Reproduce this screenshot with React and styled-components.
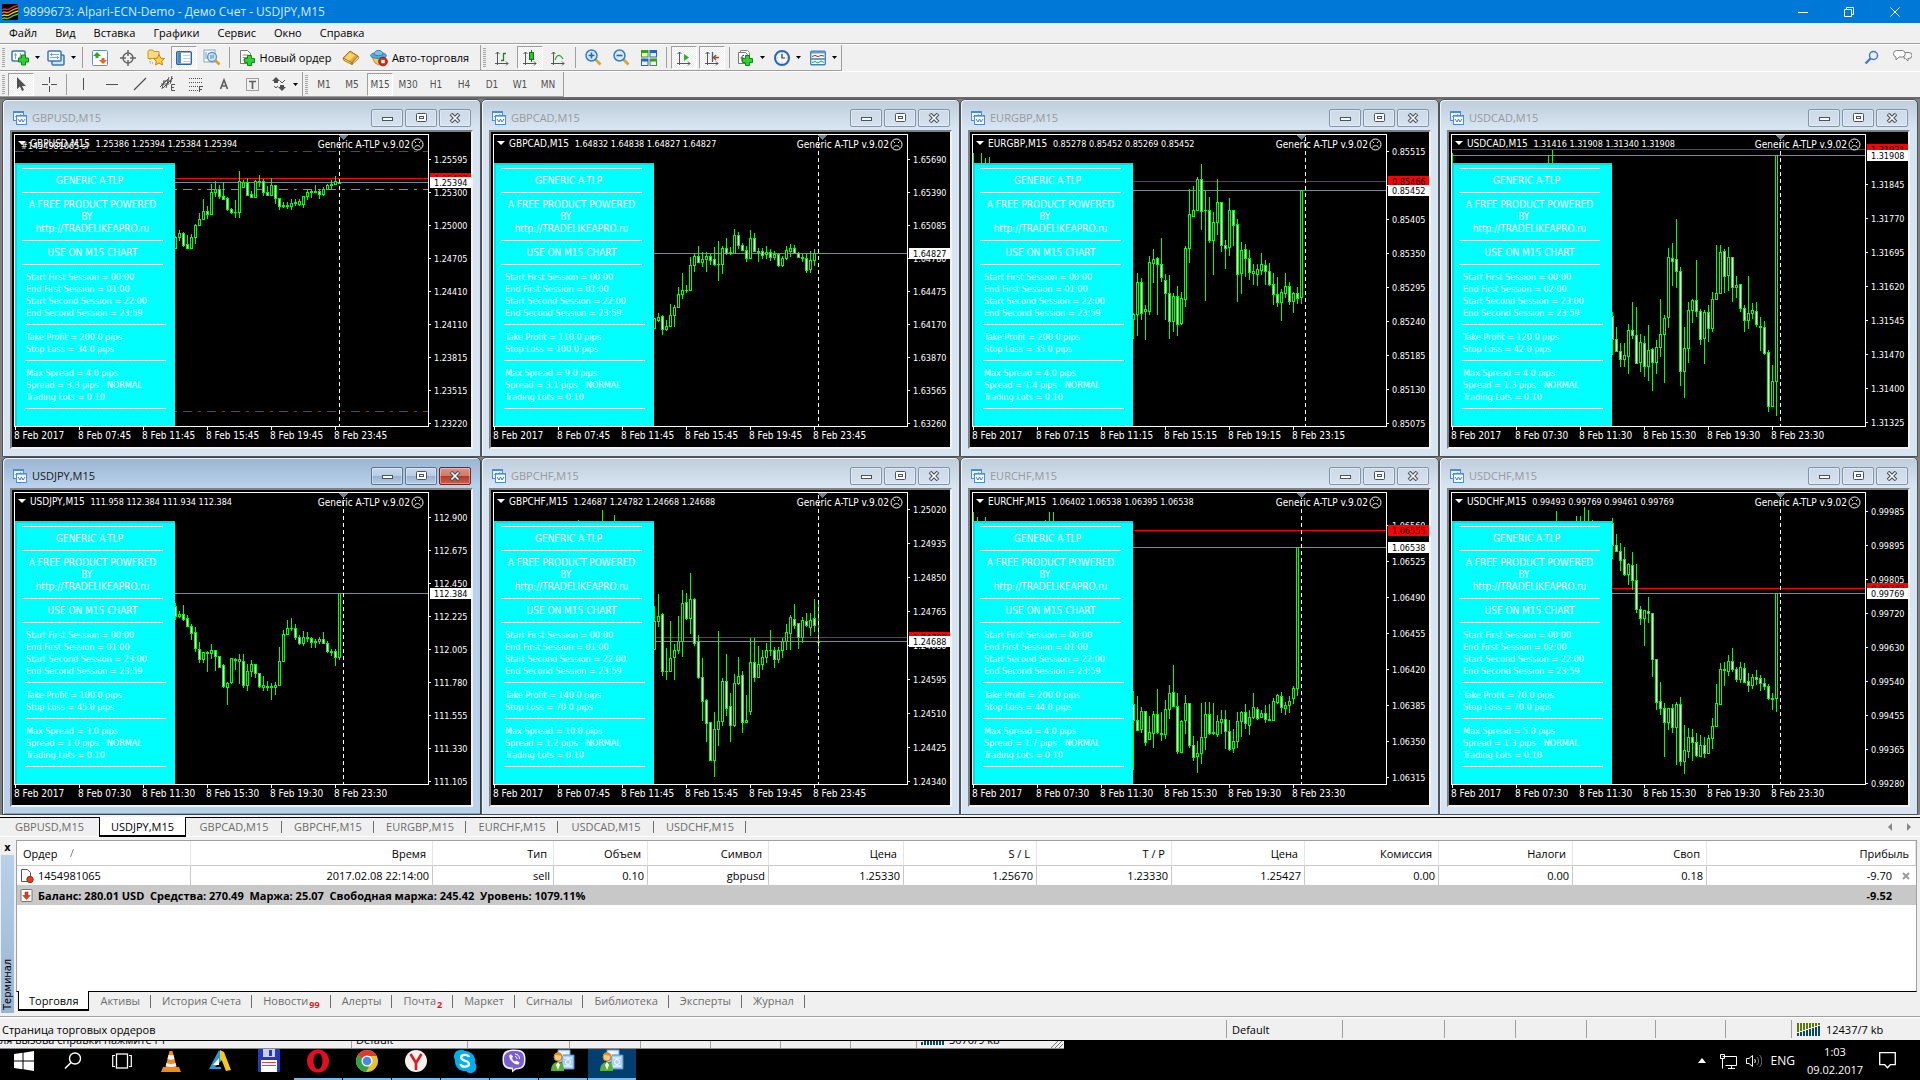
import React from "react";
import styled, { createGlobalStyle, css } from "styled-components";

const UI = '"Open Sans", "Noto Sans", sans-serif';
const TAHOMA = '"DejaVu Sans Condensed", "DejaVu Sans", sans-serif';

const GlobalStyle = createGlobalStyle`
  * { box-sizing: border-box; }
  body { margin: 0; background: #000; font-family: ${UI}; font-size: 11px; color: #000; }
  button { font: inherit; color: inherit; background: none; border: 0; padding: 0; margin: 0; }
  svg { display: block; flex: none; }
`;

const Page = styled.div`
  display: flex;
  flex-direction: column;
  min-height: 100vh;
  background: #f0f0f0;
`;

/* ---------- title bar and menu ---------- */

const TitleBar = styled.header`
  display: flex;
  align-items: center;
  height: 23px;
  padding: 0 2px;
  background: #0078d7;
  color: #d9ebfa;
`;

const AppTitle = styled.h1`
  flex: 1;
  margin: 0 0 0 5px;
  font-size: 12px;
  line-height: 16px;
  font-weight: 400;
`;

const CaptionButton = styled.button`
  display: flex;
  align-items: center;
  justify-content: center;
  width: 46px;
  height: 23px;
`;

const MenuBar = styled.nav`
  display: flex;
  height: 21px;
  border-bottom: 1px solid #a0a0a0;
`;

const MenuItem = styled.button`
  padding: 0 9px;
  line-height: 20px;
`;

/* ---------- toolbars ---------- */

const ToolRow = styled.div`
  display: flex;
  height: ${(p) => p.$h}px;
  border-top: 1px solid #fff;
`;

const Strip = styled.div`
  display: flex;
  align-items: center;
  padding-left: 2px;
  padding-right: ${(p) => p.$end}px;
  border-right: 1px solid #a0a0a0;
  border-bottom: 1px solid #a0a0a0;
`;

const Spacer = styled.div`
  flex: 1;
`;

const Grip = styled.span`
  width: 3px;
  height: 19px;
  margin-right: 2px;
  background: repeating-linear-gradient(#a6a6a6 0 1px, #f0f0f0 1px 2px);
`;

const Rule = styled.span`
  width: 1px;
  height: 21px;
  margin: 0 3px;
  background: #a0a0a0;
`;

const Tool = styled.button`
  display: flex;
  align-items: center;
  justify-content: center;
  gap: ${(p) => p.$gap || 0}px;
  height: 23px;
  width: ${(p) => (p.$w ? `${p.$w}px` : "26px")};
  margin: 0 1px;
  color: ${(p) => (p.$dim ? "#505050" : "#000")};
  white-space: nowrap;
  ${(p) =>
    p.$on &&
    css`
      background: repeating-conic-gradient(#fff 0 25%, #ececec 0 50%) 0 0 / 2px 2px;
      border: 1px solid;
      border-color: #a0a0a0 #fff #fff #a0a0a0;
    `}
`;

const Period = styled(Tool)`
  font: 10px ${TAHOMA};
`;

const Corner = styled.div`
  display: flex;
  align-items: center;
  gap: 12px;
  padding-right: 8px;
`;

/* ---------- chart windows ---------- */

const Workspace = styled.main`
  display: grid;
  grid-template-columns: repeat(4, 1fr);
  padding: 0 2px;
  border-top: 2px solid #696969;
  border-bottom: 2px solid #f4f4f4;
  background: #808080;
`;

const MdiWindow = styled.section`
  display: flex;
  flex-direction: column;
  padding: 0 7px 7px;
  border: 1px solid ${(p) => (p.$active ? "#3a4450" : "#50545a")};
  border-radius: 5px 5px 0 0;
  background: ${(p) =>
    p.$active
      ? "linear-gradient(#99b4d1 0, #b9d1ea 28px, #b9d1ea)"
      : "linear-gradient(#bfcddb 0, #d7e4f2 28px, #d7e4f2)"};
  box-shadow: inset 1px 1px 0 #eef4fa${(p) => (p.$active ? ", inset 0 -1px 0 #2fc8e0" : "")};
`;

const MdiTitle = styled.div`
  display: flex;
  align-items: center;
  height: 30px;
  padding: 6px 2px 0 3px;
`;

const MdiName = styled.h2`
  flex: 1;
  margin: 0 0 0 5px;
  font-size: 11px;
  line-height: 16px;
  font-weight: 400;
  color: ${(p) => (p.$active ? "#1a1a1a" : "#98999b")};
`;

const MdiButton = styled.button`
  display: flex;
  align-items: center;
  justify-content: center;
  width: 32px;
  height: 18px;
  margin-left: 2px;
  border: 1px solid ${(p) => (p.$close && p.$active ? "#6b2a26" : p.$active ? "#5d7490" : "#8393ac")};
  border-radius: 2px;
  background: ${(p) =>
    p.$close && p.$active
      ? "linear-gradient(#dd9287 0, #d0796c 48%, #b8392a 52%, #c9604c)"
      : p.$active
      ? "linear-gradient(#c6d8ec 0, #b8cee6 48%, #98b2cf 52%, #b5cfea)"
      : "linear-gradient(#ccd9e7, #d6e2ef)"};
  box-shadow: inset 0 0 0 1px rgba(255, 255, 255, 0.35);
`;

const ChartClient = styled.div`
  position: relative;
  height: 319px;
  border: 2px solid;
  border-color: #808080 #f2f2f2 #f2f2f2 #808080;
  background: #000;
`;

const InfoPanel = styled.div`
  position: absolute;
  left: 3px;
  top: 31px;
  width: 160px;
  height: 263px;
  padding-left: 7px;
  background: #00ffff;
  box-shadow: inset 2px 2px 0 #00e0e0;
  color: #fff;
  font: 9px/12px ${TAHOMA};
  white-space: pre;
`;

const Dashes = styled.div`
  width: 141px;
  height: 12px;
  margin-left: ${(p) => (p.$in ? 3 : 0)}px;
  background: repeating-linear-gradient(90deg, #fff 0 3px, #9ff 3px 4px) 0 5px / 141px 1px no-repeat;
`;

const Heading = styled.div`
  width: 141px;
  font-size: 10px;
  text-align: center;
`;

const Param = styled.div`
  padding-left: 4px;
`;

/* ---------- chart tabs ---------- */

const ChartTabs = styled.div`
  display: flex;
  align-items: flex-start;
  height: 20px;
  border-top: 1px solid #000;
  border-bottom: 1px solid #fff;
`;

const ChartTab = styled.button`
  display: flex;
  align-items: center;
  justify-content: center;
  width: ${(p) => p.$w}px;
  height: 17px;
  color: #6d6d6d;
  background: ${(p) => (p.$bar ? "linear-gradient(#6d6d6d, #6d6d6d) 100% 3px / 1px 12px no-repeat" : "none")};
  ${(p) =>
    p.$on &&
    css`
      height: 20px;
      margin-top: -1px;
      color: #000;
      background: #fff;
      border: solid #000;
      border-width: 0 1px 2px;
    `}
`;

const Arrows = styled.div`
  display: flex;
  gap: 15px;
  margin-left: auto;
  padding: 5px 9px 0 0;
`;

/* ---------- terminal ---------- */

const Terminal = styled.section`
  display: flex;
  flex: 1;
  padding: 3px 3px 3px 0;
  border-bottom: 1px solid #a0a0a0;
`;

const SideBar = styled.div`
  display: flex;
  flex-direction: column;
  align-items: center;
  width: 15px;
  margin-right: 1px;
`;

const SideClose = styled.button`
  height: 15px;
  font: bold 11px/10px ${TAHOMA};
`;

const SideTitle = styled.h2`
  flex: 1;
  display: flex;
  align-items: center;
  width: 13px;
  margin: 0;
  padding: 3px 0;
  background: linear-gradient(#99b4d1, #b9d1ea);
  font: 11px/13px ${TAHOMA};
  writing-mode: vertical-rl;
  transform: rotate(180deg);
`;

const TerminalBody = styled.div`
  flex: 1;
  display: flex;
  flex-direction: column;
`;

const TableBox = styled.div`
  flex: 1;
  border: 1px solid #a0a0a0;
  border-bottom-color: #000;
  background: #fff;
`;

const Orders = styled.table`
  width: 100%;
  table-layout: fixed;
  border-collapse: separate;
  border-spacing: 0;
  font-size: 11px;
`;

const Th = styled.th`
  height: 25px;
  padding: 0 6px;
  border-right: 1px solid #e5e5e5;
  border-bottom: 1px solid #c8c8c8;
  font-weight: 400;
  text-align: ${(p) => (p.$left ? "left" : "right")};
`;

const Td = styled.td`
  height: 19px;
  padding: 0 ${(p) => (p.$last ? 6 : 3)}px 0 ${(p) => (p.$left ? 3 : 0)}px;
  border-right: ${(p) => (p.$last ? 0 : 1)}px solid #c8c8c8;
  text-align: ${(p) => (p.$left ? "left" : "right")};
`;

const Sum = styled.td`
  height: 20px;
  padding: 0 ${(p) => (p.$last ? 24 : 3)}px 0 3px;
  background: #c8c8c8;
  font-weight: 700;
  text-align: ${(p) => (p.$last ? "right" : "left")};
`;

const Inline = styled.span`
  display: flex;
  align-items: center;
  justify-content: ${(p) => (p.$end ? "flex-end" : "flex-start")};
  gap: ${(p) => p.$gap}px;
`;

const TermTabs = styled.div`
  display: flex;
  height: 21px;
  padding-left: 2px;
`;

const TermTab = styled.button`
  display: flex;
  align-items: center;
  height: 17px;
  padding: 0 11px;
  color: #6d6d6d;
  background: linear-gradient(#6d6d6d, #6d6d6d) 100% 3px / 1px 13px no-repeat;
  ${(p) =>
    p.$on &&
    css`
      height: 20px;
      margin-top: -1px;
      padding: 0 10px;
      color: #000;
      background: #fff;
      border: solid #000;
      border-width: 0 1px 2px;
    `}
`;

const Count = styled.sub`
  align-self: flex-end;
  margin-left: 1px;
  font-size: 9px;
  line-height: 9px;
  font-weight: 700;
  color: #f0141e;
`;

/* ---------- status bar ---------- */

const StatusBar = styled.footer`
  display: flex;
  align-items: center;
  height: 23px;
  padding-left: 2px;
  border-top: 1px solid #fff;
`;

const StatusCell = styled.div`
  display: flex;
  align-items: center;
  gap: 5px;
  width: ${(p) => p.$w}px;
  height: 18px;
  padding-left: 5px;
  border-left: 1px solid #a0a0a0;
`;

/* ---------- task bar ---------- */

const TaskBar = styled.div`
  position: relative;
  display: flex;
  height: 40px;
  border-top: 1px solid #000;
  background: #000;
  color: #fff;
  overflow: hidden;
`;

const OldStatus = styled.div`
  position: absolute;
  left: 0;
  top: -1px;
  width: 1064px;
  height: 9px;
  display: flex;
  align-items: flex-end;
  overflow: hidden;
  border-bottom: 1px solid #8a8a8a;
  background: #f0f0f0;
  color: #000;
  line-height: 15px;
`;

const OldCell = styled.div`
  display: flex;
  gap: 4px;
  width: ${(p) => p.$w}px;
  height: 16px;
  padding-left: ${(p) => (p.$first ? 0 : 4)}px;
  border-right: ${(p) => (p.$last ? 0 : 1)}px solid #a0a0a0;
  white-space: nowrap;
`;

const TaskButton = styled.button`
  display: flex;
  align-items: center;
  justify-content: center;
  width: 48px;
  margin-right: 1px;
  background: ${(p) => (p.$on ? "#023f6e" : "none")};
  box-shadow: ${(p) => (p.$open ? "inset 0 -2px 0 #76b9ed" : "none")};
`;

const Tray = styled.div`
  display: flex;
  align-items: center;
  margin-left: auto;
  padding-right: 24px;
  font-size: 12px;
`;

const Lang = styled.span`
  margin: 0 12px 0 9px;
`;

const Clock = styled.time`
  width: 56px;
  margin-right: 16px;
  font-size: 11px;
  line-height: 18px;
  text-align: center;
`;

/* ---------- icons ---------- */

const Svg = ({ w = 16, h, children, ...rest }) => (
  <svg width={w} height={h || w} viewBox={`0 0 ${w} ${h || w}`} fill="none" aria-hidden="true" {...rest}>
    {children}
  </svg>
);

const Drop = () => (
  <Svg w={5} h={3}><path d="M0 0h5L2.500 3z" fill="#000" /></Svg>
);

const Plus = ({ x = 5, y = 5 }) => (
  <path transform={`translate(${x} ${y})`} d="M3.500.5h4v3h3v4h-3v3h-4v-3h-3v-4h3z" fill="#2fd02f" stroke="#0c8a14" />
);

const Axes = ({ children }) => (
  <Svg w={16}>
    <path d="M3.500 15V2M1.500 4l2-2 2 2M1 13.500h13M12 11.500l2 2-2 2" stroke="#555" />
    {children}
  </Svg>
);

const Signal = () => (
  <Svg w={24} h={13}>
    {[0, 1, 2, 3, 4, 5, 6, 7].map((i) => (
      <g key={i}>
        <rect x={i * 3} y="0" width="2" height={9 - i} fill="#5c7a00" />
        <rect x={i * 3} y={10 - i} width="2" height={3 + i} fill="#0a4668" />
      </g>
    ))}
  </Svg>
);

const Icon = {
  logo: (
    <Svg>
      <rect width="16" height="16" fill="#000" />
      <path d="M0 6c3-3 4 1 7-1s5-3 9-4" stroke="#e02a1a" strokeWidth="1.500" />
      <path d="M0 9c3-3 4 1 7-1s5-3 9-4" stroke="#f0801a" strokeWidth="1.500" />
      <path d="M0 12c3-3 4 1 7-1s5-3 9-4" stroke="#e8d21a" strokeWidth="1.500" />
      <path d="M0 15c3-3 4 1 7-1s5-3 9-4" stroke="#6cc81a" strokeWidth="1.500" />
    </Svg>
  ),
  newChart: (
    <Svg w={18} h={16}>
      <rect x="1" y="1" width="13" height="10" rx="1" fill="#fff" stroke="#3a78b0" strokeWidth="1.500" />
      <path d="M4.500 3v6M3 5h3M9.500 3v6M8 7h3" stroke="#7aa6c8" />
      <Plus x={7} y={4.500} />
    </Svg>
  ),
  profiles: (
    <Svg w={18} h={16}>
      <rect x="5" y="5" width="12" height="10" rx="1" fill="#cfe2f2" stroke="#3a78b0" strokeWidth="1.500" />
      <rect x="1" y="1" width="13" height="10" rx="1" fill="#f4f9fd" stroke="#3a78b0" strokeWidth="1.500" />
      <path d="M3 4.500h9M3 7.500h9M4.500 3v3M10.500 6v3" stroke="#7aa6c8" />
    </Svg>
  ),
  market: (
    <Svg>
      <rect x=".5" y=".5" width="15" height="15" rx="1" fill="#fff" stroke="#5f95c4" />
      <path d="M5 2l4 4H6.500v2h-3V6H1z" fill="#22b022" />
      <path d="M11 14l4-4h-2.500V8h-3v2H7z" fill="#e8602a" />
    </Svg>
  ),
  cross: (
    <Svg>
      <circle cx="8" cy="8" r="5" stroke="#666" strokeWidth="1.500" />
      <path d="M8 0v6M8 10v6M0 8h6M10 8h6" stroke="#666" strokeWidth="1.500" />
    </Svg>
  ),
  favorites: (
    <Svg w={18}>
      <path d="M1 2.500l1-1.500h4l1 1.500h5v7H1z" fill="#f6dc7c" stroke="#c29a2a" />
      <path d="M3 10v4h4" stroke="#888" strokeDasharray="1 1" />
      <path d="M12 5.500l1.700 3.600 3.800.4-2.800 2.600.8 3.900-3.500-2-3.500 2 .8-3.900L6.500 9.500l3.800-.4z" fill="#ffcf3c" stroke="#c0861c" />
    </Svg>
  ),
  navigator: (
    <Svg>
      <rect x=".7" y="1.700" width="14.600" height="12.600" rx="1" fill="#fff" stroke="#2a64a0" strokeWidth="1.400" />
      <rect x="1.500" y="2.500" width="3.500" height="11" fill="#4a88c8" />
      <path d="M7 5.500h7M7 8.500h7M7 11.500h7" stroke="#b8cfe4" />
    </Svg>
  ),
  tester: (
    <Svg w={18}>
      <rect x="1" y="1" width="11" height="12" fill="#f8fafc" stroke="#8aa6c0" />
      <path d="M3 3v7M5.500 4v7" stroke="#6a9ac8" />
      <circle cx="9" cy="8" r="4.500" fill="#cfe6f8" fillOpacity=".8" stroke="#5f95c4" strokeWidth="1.300" />
      <path d="M8 6v4M10 5.500v4" stroke="#4a80b0" />
      <path d="M12.500 11.500l4 4" stroke="#d8a020" strokeWidth="2.500" />
    </Svg>
  ),
  newOrder: (
    <Svg w={17} h={18}>
      <path d="M1.500 1.500h7l3 3v10h-10z" fill="#fff" stroke="#777" />
      <path d="M3.500 6h6M3.500 8.500h5M3.500 11h3" stroke="#888" />
      <Plus x={5} y={6} />
    </Svg>
  ),
  book: (
    <Svg w={18}>
      <path d="M1 9l7-7 8 5-6 7z" fill="#e0a838" stroke="#a8741c" />
      <path d="M2.500 9L8 3.500l5 3L7 12z" fill="#f6d468" />
      <path d="M1 9l1 2.500 8 4V14zM10 14v1.500l6.500-6L16 7z" fill="#fbeec0" stroke="#a8741c" />
    </Svg>
  ),
  auto: (
    <Svg w={18} h={18}>
      <path d="M2 8h13l-2 6-4 2-4-2z" fill="#f2cc58" stroke="#c0902a" />
      <ellipse cx="8.500" cy="6.500" rx="8" ry="3" fill="#5aa8dc" stroke="#3a80b0" />
      <path d="M4 5.500C4 0 13 0 13 5.500c-2 1.500-7 1.500-9 0z" fill="#7cc0ea" stroke="#3a80b0" />
      <circle cx="13" cy="12.500" r="4.300" fill="#d82a1c" stroke="#a01810" />
      <rect x="11.300" y="10.800" width="3.400" height="3.400" fill="#fff" />
    </Svg>
  ),
  bars: <Axes><path d="M9.500 3v8M9.500 3.500H12M7 10.500h2.500" stroke="#1a8a1a" strokeWidth="1.300" /></Axes>,
  candles: <Axes><path d="M9.500 0v12" stroke="#0c7a14" /><rect x="7.500" y="2.500" width="4" height="7" fill="#28c828" stroke="#0c7a14" /></Axes>,
  line: <Axes><path d="M5 10c2-6 5-6 8-1" stroke="#3aa03a" strokeWidth="1.200" /></Axes>,
  scroll: <Axes><path d="M8 4l5 3.500L8 11z" fill="#28b028" /></Axes>,
  shift: <Axes><path d="M8.500 2v10" stroke="#2a64a0" strokeWidth="1.300" /><path d="M15 7.500h-5M12 5l-2.500 2.500L12 10" stroke="#c03a1a" strokeWidth="1.300" /></Axes>,
  zoomIn: (
    <Svg w={17}>
      <path d="M10.500 10.500l5 5" stroke="#d8a830" strokeWidth="2.800" />
      <circle cx="6.500" cy="6.500" r="5.500" fill="#d4ecfa" stroke="#3a7cc0" strokeWidth="1.500" />
      <path d="M3.500 6.500h6M6.500 3.500v6" stroke="#2a64b0" strokeWidth="1.600" />
    </Svg>
  ),
  zoomOut: (
    <Svg w={17}>
      <path d="M10.500 10.500l5 5" stroke="#d8a830" strokeWidth="2.800" />
      <circle cx="6.500" cy="6.500" r="5.500" fill="#d4ecfa" stroke="#3a7cc0" strokeWidth="1.500" />
      <path d="M3.500 6.500h6" stroke="#2a64b0" strokeWidth="1.600" />
    </Svg>
  ),
  tile: (
    <Svg>
      <rect width="7.500" height="7.500" fill="#3c9a1c" /><rect x="8.500" width="7.500" height="7.500" fill="#2a5fd0" />
      <rect y="8.500" width="7.500" height="7.500" fill="#2a5fd0" /><rect x="8.500" y="8.500" width="7.500" height="7.500" fill="#3c9a1c" />
      <path d="M1 3h5.500v3.500H1zM9.500 3H15v3.500H9.500zM1 11.500h5.500V15H1zM9.500 11.500H15V15H9.500z" fill="#eaf4e4" />
    </Svg>
  ),
  indicator: (
    <Svg w={17} h={18}>
      <path d="M3.500 1.500h7l2 2v9h-9z" fill="#fff" stroke="#888" />
      <path d="M1.500 3.500h7l2 2v9h-9z" fill="#fff" stroke="#777" />
      <path d="M7 6.500c-2-.5-2 1-2 2v4M3.500 9h3" stroke="#444" />
      <Plus x={5} y={6} />
    </Svg>
  ),
  clock: (
    <Svg>
      <circle cx="8" cy="8" r="7" fill="#f4f8fc" stroke="#2468b8" strokeWidth="2" />
      <path d="M8 4v4h3" stroke="#333" strokeWidth="1.200" />
      <path d="M8 2.500v1M8 12.500v1M2.500 8h1M12.500 8h1" stroke="#888" />
    </Svg>
  ),
  template: (
    <Svg>
      <rect x=".7" y="1.200" width="14.600" height="13.600" rx="1" fill="#fff" stroke="#3f83c0" strokeWidth="1.400" />
      <path d="M1 2.500h14M1 9h14" stroke="#5f9fd8" strokeWidth="2" />
      <path d="M2 6.500l3-1 3 1 3-1 3 .5" stroke="#a82a1a" />
      <path d="M2 12.500l3-1 3 1.500 3-2 3 1.500" stroke="#2a9a2a" />
    </Svg>
  ),
  find: (
    <Svg>
      <circle cx="9.500" cy="5.500" r="4" stroke="#3a78d8" strokeWidth="1.500" />
      <path d="M6.500 8.500L1.500 13.500" stroke="#3a78d8" strokeWidth="2.300" />
    </Svg>
  ),
  chat: (
    <Svg w={20}>
      <path d="M12 4.500h5a2.500 2.500 0 010 6h-1v2.500L13.500 10.500H12z" fill="#f4f4f4" stroke="#808080" />
      <path d="M4.500 2.500h6a3.300 3.300 0 010 6.500H7L4 12V9a3.300 3.300 0 01.5-6.500z" fill="#fff" stroke="#808080" />
    </Svg>
  ),
  pointer: <Svg><path d="M4 1v12l3-2.500L9 15l2-1-2-4h4z" fill="#505050" /></Svg>,
  plusCross: <Svg><path d="M8.500 1v6M8.500 10v6M1 8.500h6M10 8.500h6" stroke="#505050" /></Svg>,
  vline: <Svg><path d="M7.500 2v12" stroke="#505050" /></Svg>,
  hline: <Svg><path d="M2 8.500h12" stroke="#505050" /></Svg>,
  trend: <Svg><path d="M2 14L14 2" stroke="#505050" strokeWidth="1.200" /></Svg>,
  channel: (
    <Svg w={18}>
      <path d="M1 12L9 4M4 13l10-10M2 9l8 0M4 6h9M3 14L5 6M7 13l3-11M11 9l2-8" stroke="#505050" />
      <path d="M16 9.500h-3.500v6H16M12.500 12.500H15" stroke="#505050" />
    </Svg>
  ),
  fibo: (
    <Svg>
      <path d="M1 2.500h14M1 6.500h14M1 10.500h14M1 14.500h9" stroke="#505050" strokeDasharray="1 1" />
      <path d="M15 10.500h-3.500V16M11.500 13.500H14" stroke="#505050" />
    </Svg>
  ),
  textA: <Svg><path d="M4.500 13L8 4l3.500 9M5.500 10h5" stroke="#606060" strokeWidth="1.700" /></Svg>,
  label: (
    <Svg>
      <rect x="2.500" y="2.500" width="12" height="12" stroke="#505050" strokeDasharray="1 1" />
      <path d="M5 5.500h7M8.500 5.500V13" stroke="#606060" strokeWidth="1.700" />
    </Svg>
  ),
  shapes: (
    <Svg>
      <path d="M5 1l4 4H1z M3 5h4v2H3zM11 15l-4-4h8zM9 9h4v2H9z" fill="#505050" />
      <path d="M3 10l2 2 2-2M9 5l2 2 3-3" stroke="#505050" />
    </Svg>
  ),
  mdi: (
    <Svg w={14}>
      <rect x=".5" y=".5" width="10" height="9" fill="#eef5ff" stroke="#4a8ae0" />
      <path d="M1 1.500h9" stroke="#4a8ae0" /><path d="M2 6l2-2 2 2 2-3" stroke="#7aa8e8" />
      <rect x="3.500" y="4.500" width="10" height="9" fill="#fff" stroke="#4a8ae0" />
      <path d="M4 5.500h9" stroke="#8ab8f0" /><path d="M5 8l2 3 1.500-3 1.500 3 2-3" stroke="#3a78d8" />
    </Svg>
  ),
  min: <Svg w={12} h={10}><rect x="1.500" y="4.500" width="10" height="3" fill="#fff" stroke="#4a5160" /></Svg>,
  max: (
    <Svg w={12} h={10}>
      <rect x="1.500" y=".5" width="10" height="8" rx="1" fill="#fff" stroke="#4a5160" />
      <rect x="4.500" y="3.500" width="4" height="2" stroke="#4a5160" />
    </Svg>
  ),
  close: (
    <Svg w={12} h={10}>
      <path d="M2 1l8 8M10 1L2 9" stroke="#4a5160" strokeWidth="3.800" />
      <path d="M2.500 1.500l7 7M9.500 1.500l-7 7" stroke="#fff" strokeWidth="1.600" />
    </Svg>
  ),
};

/* ---------- chart data ---------- */

/* Each bar is "high top bottom low", with a trailing d for a falling one, in thirds of a pixel. */
const CHARTS = [
  {
    name: "GBPUSD,M15", quote: "1.25386 1.25394 1.25384 1.25394", off: -2, now: 327,
    price: "1.25394", py: 50, ask: "1.25427", ay: 46, y0: 27, step: 33, first: "07:45 11:45 15:45 19:45 23:45",
    ticks: "1.25595 1.25300 1.25000 1.24705 1.24410 1.24110 1.23815 1.23515 1.23220",
    s: ["00:00", "01:00", "22:00", "23:59"], tp: "200.0", sl: "34.0", max: "4.0", sp: "3.3",
    bars: "320 322 355 355,300 311 322 333,307 309 345 352 d,315 343 355 356 d,313 321 354 356,283 286 321 343,249 268 286 290,207 244 268 270,229 244 254 268 d,164 187 254 255,153 178 187 202,165 178 199 209 d,157 199 207 210 d,201 205 238 245 d,235 238 248 254 d,210 246 248 265,124 155 248 265,152 157 172 172,146 157 196 200 d,185 193 203 205 d,150 155 203 204,135 153 156 172,147 155 187 199 d,170 187 197 199 d,145 166 197 199,165 166 205 223 d,204 205 228 240 d,217 226 229 236,216 226 229 237,207 219 229 240,207 217 220 229,207 215 224 230,198 200 224 234,179 186 200 210,178 184 187 204,166 184 187 190,179 184 193 207 d,173 178 193 200,163 166 178 180,150 162 165 178,138 153 163 166,155 156 159 162",
  },
  {
    name: "GBPCAD,M15", quote: "1.64832 1.64838 1.64827 1.64827", off: -32, now: 327,
    price: "1.64827", py: 121, y0: 27, step: 33, first: "07:45 11:45 15:45 19:45 23:45",
    ticks: "1.65690 1.65390 1.65085 1.64780 1.64475 1.64170 1.63870 1.63565 1.63260",
    s: ["00:00", "01:00", "22:00", "23:59"], tp: "110.0", sl: "100.0", max: "9.0", sp: "3.1",
    bars: "655 656 686 686,640 652 661 668,645 648 689 707 d,660 679 689 694,613 646 680 683,617 621 646 682,562 583 622 625,519 571 582 597,556 570 572 581,471 496 570 570,459 469 497 518,438 468 487 490 d,458 478 487 501,457 469 479 516,460 469 481 495 d,442 479 494 500 d,423 492 494 543,439 444 493 524,414 444 459 466 d,442 457 460 466,387 405 459 461,396 405 437 448 d,429 435 451 455 d,440 450 475 488 d,390 414 475 477,400 414 454 458 d,445 453 456 486,445 455 467 478 d,439 456 464 479,447 457 472 483 d,455 463 473 480,459 463 496 503 d,470 475 496 503,438 450 475 480,432 446 453 473,436 446 459 463 d,456 459 471 474 d,464 472 475 487,461 474 510 520 d,454 482 509 521,448 460 482 500,459 459 461 462",
  },
  {
    name: "EURGBP,M15", quote: "0.85278 0.85452 0.85269 0.85452", off: -32, now: 335,
    price: "0.85452", py: 58, ask: "0.85466", ay: 49, y0: 19, step: 34, first: "07:15 11:15 15:15 19:15 23:15",
    ticks: "0.85515 0.85460 0.85405 0.85350 0.85295 0.85240 0.85185 0.85130 0.85075",
    s: ["00:00", "01:00", "22:00", "23:59"], tp: "200.0", sl: "35.0", max: "4.0", sp: "1.4",
    over: [[3, 21], [11, 21], [15, 26], [19, 25]],
    bars: "640 642 658 718,519 546 643 708,534 546 640 661 d,615 628 634 722,468 487 634 645,447 478 490 549,471 474 493 645 d,414 493 533 547 d,522 540 580 660 d,525 580 664 717 d,579 588 664 696,559 588 674 708 d,576 596 670 677,438 445 598 621,267 343 445 489,258 332 349 350,231 237 332 335,192 238 334 390 d,274 330 332 603,291 331 422 429 d,336 367 422 525,237 307 368 405,306 307 436 456 d,420 436 446 507 d,294 331 443 470,330 331 376 438 d,357 373 523 606 d,426 451 521 582,434 448 475 532 d,450 476 516 540 d,492 514 520 555,492 507 523 558,459 493 510 525,480 496 513 555 d,489 514 553 558 d,519 552 583 615 d,531 583 607 621 d,567 577 607 663,519 558 580 594,546 558 604 615 d,576 580 604 639,561 579 596 612 d,270 271 592 612",
  },
  {
    name: "USDCAD,M15", quote: "1.31416 1.31908 1.31340 1.31908", off: -32, now: 331,
    price: "1.31908", py: 23, ask: "1.31921", ay: 17, y0: 52, step: 34, first: "07:30 11:30 15:30 19:30 23:30",
    ticks: "1.31845 1.31770 1.31695 1.31620 1.31545 1.31470 1.31400 1.31325",
    s: ["00:00", "02:00", "23:00", "23:59"], tp: "120.0", sl: "42.0", max: "4.0", sp: "1.3",
    over: [[3, 21], [99, 23], [103, 18]],
    bars: "636 650 718 765 d,682 718 754 757 d,730 754 779 803 d,729 766 779 801,672 691 769 822,606 691 706 718 d,621 706 789 792 d,703 727 787 816,709 730 799 831 d,675 751 799 843,744 747 787 873 d,720 741 787 822,597 703 742 771,646 654 703 849,444 472 653 684,429 475 484 558 d,357 478 514 564 d,501 514 815 858 d,681 745 815 894,606 631 745 789,597 601 632 669,480 601 634 651 d,627 634 718 735 d,630 637 716 792,615 637 685 728 d,576 598 685 697,435 580 598 600,435 457 580 582,448 455 529 579 d,441 472 526 573,471 472 562 606 d,530 556 563 594,552 553 625 638 d,616 625 661 696 d,528 640 661 687,609 632 640 657,606 634 673 681 d,652 678 681 753,663 682 760 765 d,750 757 919 936 d,795 844 919 922,166 166 844 950",
  },
  {
    name: "USDJPY,M15", quote: "111.958 112.384 111.934 112.384", off: -40, now: 331, active: true,
    price: "112.384", py: 103, y0: 27, step: 33, first: "07:30 11:30 15:30 19:30 23:30",
    ticks: "112.900 112.675 112.450 112.225 112.005 111.780 111.555 111.330 111.105",
    s: ["00:00", "01:00", "23:00", "23:59"], tp: "100.0", sl: "45.0", max: "3.0", sp: "1.0",
    bars: "459 468 499 510 d,483 492 500 504,465 492 507 513 d,495 505 528 531 d,522 529 550 570 d,531 546 595 607 d,577 598 628 640 d,606 607 628 640,603 607 609 666,582 600 610 627,600 601 619 663 d,618 619 651 655 d,643 646 709 714 d,697 700 712 766,624 625 697 703,624 627 630 660,612 629 634 702,612 634 706 714 d,642 664 706 723,630 643 664 682,642 643 670 684 d,669 670 710 714 d,678 706 711 723,693 709 711 723,699 709 711 750,697 706 712 736,591 634 706 710,540 553 634 636,510 535 553 556,504 534 536 543,522 535 562 570 d,555 562 580 586 d,543 562 580 588,546 562 566 576,561 565 577 594 d,567 573 576 594,561 568 574 583,546 568 581 583 d,574 580 604 609 d,598 603 606 618,597 604 621 648 d,430 430 621 630",
  },
  {
    name: "GBPCHF,M15", quote: "1.24687 1.24782 1.24668 1.24688", off: -40, now: 327,
    price: "1.24688", py: 151, ask: "1.24700", ay: 147, y0: 19, step: 34, first: "07:45 11:45 15:45 19:45 23:45",
    ticks: "1.25020 1.24935 1.24850 1.24765 1.24680 1.24595 1.24510 1.24425 1.24340",
    s: ["00:00", "01:00", "22:00", "23:59"], tp: "140.0", sl: "70.0", max: "10.0", sp: "1.2",
    over: [[87, 30], [111, 20], [123, 25]],
    bars: "468 515 598 600,432 499 514 532,489 493 664 679 d,594 663 665 690,514 625 664 667,583 601 622 690,499 574 601 613,420 460 573 621,429 457 505 510 d,369 447 505 552,444 448 580 588 d,556 574 683 687 d,625 682 754 813 d,747 751 820 876 d,816 817 931 934 d,786 838 932 981,543 814 838 888,684 694 814 828,612 694 775 798 d,729 769 826 876 d,672 700 826 831,622 678 700 705,664 676 817 849 d,735 812 817 819,564 637 784 795,564 637 682 697 d,588 643 682 684,600 622 643 660,580 601 622 639,540 600 602 618,591 601 627 654 d,591 601 627 639,564 574 601 624,522 547 574 601,495 502 550 600,462 508 526 537 d,519 520 562 597 d,501 511 562 579,489 514 527 532 d,489 511 532 558,447 505 526 546 d,462 574 577 600",
  },
  {
    name: "EURCHF,M15", quote: "1.06402 1.06538 1.06395 1.06538", off: -40, now: 331,
    price: "1.06538", py: 57, ask: "1.06555", ay: 40, y0: 35, step: 36, first: "07:30 11:30 15:30 19:30 23:30",
    ticks: "1.06560 1.06525 1.06490 1.06455 1.06420 1.06385 1.06350 1.06315",
    s: ["00:00", "01:00", "22:00", "23:59"], tp: "200.0", sl: "44.0", max: "4.0", sp: "1.7",
    over: [[3, 22], [7, 27], [15, 27], [75, 30], [79, 22], [83, 22]],
    bars: "723 763 811 960 d,738 811 841 843 d,771 784 838 850,783 784 877 890 d,800 847 868 870,783 793 850 894,717 793 847 852 d,786 849 853 873,750 778 853 867,705 730 778 808,645 727 769 772 d,730 769 905 912 d,811 813 907 909,735 760 811 852,759 760 885 895 d,858 885 922 934 d,873 910 920 969,759 862 910 942,756 793 862 900,756 793 850 856 d,759 847 850 855,795 814 853 861,780 808 817 852,781 808 844 897 d,810 844 898 903 d,838 874 894 909,786 814 874 895,783 787 814 862,763 787 820 837 d,781 802 825 855,729 772 802 807,771 778 804 810 d,780 790 802 805,765 790 808 819 d,762 808 810 813,745 754 810 813,732 736 757 763,726 739 772 789 d,756 766 774 795,739 754 766 790,708 715 745 762,291 292 715 738",
  },
  {
    name: "USDCHF,M15", quote: "0.99493 0.99769 0.99461 0.99769", off: -40, now: 331,
    price: "0.99769", py: 103, ask: "0.99782", ay: 98, y0: 21, step: 34, first: "07:30 11:30 15:30 19:30 23:30",
    ticks: "0.99985 0.99895 0.99805 0.99720 0.99630 0.99540 0.99455 0.99365 0.99280",
    s: ["00:00", "02:00", "22:00", "23:59"], tp: "70.0", sl: "70.0", max: "5.0", sp: "1.3",
    over: [[107, 21], [127, 26], [131, 26], [135, 17], [139, 20], [143, 30]],
    bars: "204 220 286 327 d,252 286 304 306 d,279 304 331 363 d,291 329 373 378 d,340 343 373 405,306 346 391 420 d,342 391 478 490 d,468 478 506 525 d,480 481 506 588,441 484 490 519 d,489 490 628 681 d,627 628 757 780 d,696 754 775 795 d,759 775 817 921 d,774 775 817 840,762 775 832 849 d,756 763 832 945,741 763 934 948 d,825 901 934 972,834 862 903 924,837 862 878 933 d,849 877 916 921 d,855 886 919 921,861 886 910 924 d,855 865 910 912,804 829 865 897,702 760 829 831,640 657 763 765,636 659 662 708,615 634 664 679,594 634 658 666 d,651 658 688 697 d,636 652 688 699,639 655 697 699 d,669 694 706 726 d,672 682 706 717,660 682 688 705 d,675 685 700 723 d,684 700 710 720 d,702 709 745 750 d,729 744 747 780,430 430 745 786",
  },
];

const box = (x, y, w, h) => `M${x} ${y}h${w}v${h}h${-w}z`;

function candlePaths(chart) {
  let lime = "";
  let rising = "";
  let falling = "";
  chart.bars.split(",").forEach((bar, i) => {
    const parts = bar.split(" ");
    const [hi, top, bottom, lo] = parts.slice(0, 4).map((v) => Math.floor(v / 3) + chart.off);
    const x = 163 + i * 4;
    const h = Math.max(1, bottom - top + 1);
    lime += box(x, hi, 1, Math.max(1, lo - hi)) + box(x - 1, top, 3, h);
    if (h > 2) {
      if (parts[4]) falling += box(x, top + 1, 1, h - 2);
      else rising += box(x, top + 1, 1, h - 2);
    }
  });
  (chart.over || []).forEach(([x, y]) => {
    lime += box(x, y, 1, 31 - y);
  });
  return { lime, rising, falling };
}

const ChartText = styled.text`
  font: 10px ${TAHOMA};
  fill: #fff;
  text-anchor: ${(p) => (p.$end ? "end" : "start")};
  white-space: pre;
`;

const Figure = styled.text`
  font: 9px ${TAHOMA};
  fill: ${(p) => (p.$dark ? "#000" : "#fff")};
`;

const Quote = styled.tspan`
  font-size: 9px;
`;

function Chart({ chart }) {
  const { lime, rising, falling } = candlePaths(chart);
  const traded = chart.name === "GBPUSD,M15";
  const times = ["8 Feb 2017", ...chart.first.split(" ").map((t) => `8 Feb ${t}`)];
  return (
    <svg width="100%" height="315" role="img" aria-label={`${chart.name} price chart`}>
      <g shapeRendering="crispEdges">
        {traded && (
          <>
            <path d="M3 19.500H416" stroke="#f00" strokeDasharray="9 6 3 6" />
            <path d="M163 279.500H416" stroke="#f00" strokeDasharray="9 6 3 6" strokeDashoffset="16" />
            <path d="M163 57.500H416" stroke="#32cd32" strokeDasharray="9 6 3 6" strokeDashoffset="16" />
          </>
        )}
        {chart.ask && <path d={`M3 ${chart.ay}.5H416`} stroke="#f00" />}
        <path d={`M3 ${chart.py}.5H416`} stroke="#778899" />
        <path d={lime} fill="#0f0" />
        <path d={rising} fill="#000" />
        <path d={falling} fill="#fff" />
        <path d={`M${chart.now}.5 5V294`} stroke="#fff" strokeDasharray="4 3" />
        <path d="M327 3h9l-4.500 5z" fill="#708090" />
        <rect x="2.500" y="2.500" width="414" height="292" stroke="#fff" fill="none" />
        <path d={times.map((_, i) => box(3 + i * 64, 295, 1, 3)).join("")} fill="#fff" />
      </g>
      {chart.ticks.split(" ").map((t, i) => (
        <g key={t}>
          <rect x="417" y={chart.y0 + i * chart.step} width="2" height="1" fill="#fff" />
          <Figure x="422" y={chart.y0 + i * chart.step + 4}>{t}</Figure>
        </g>
      ))}
      {chart.ask && (
        <g>
          <rect x="418" y={chart.ay - 5} width="41" height="11" fill="#f00" />
          <Figure $dark x="422" y={chart.ay + 4}>{chart.ask}</Figure>
        </g>
      )}
      <rect x="418" y={chart.py - 5} width="41" height="11" fill="#fff" />
      <Figure $dark x="422" y={chart.py + 4}>{chart.price}</Figure>
      <path d="M6 9h8l-4 4z" fill="#fff" />
      {traded && <Figure x="9" y="17">#1454981065 sl</Figure>}
      <ChartText x="18" y="15">{chart.name}{"\u00a0\u00a0"}<Quote>{chart.quote}</Quote></ChartText>
      <ChartText x="398" y="16" $end>Generic A-TLP v.9.02</ChartText>
      <g stroke="#fff" fill="none">
        <circle cx="405.500" cy="12.500" r="5.500" />
        <path d="M402.500 9.500l1.500 1.500M408.500 9.500l-1.500 1.500M402.500 15.500c1-2.500 5-2.500 6 0" />
      </g>
      {times.map((t, i) => (
        <ChartText key={t} x={2 + i * 64} y="307">{t}</ChartText>
      ))}
    </svg>
  );
}

function Info({ chart }) {
  const [a, b, c, d] = chart.s;
  return (
    <InfoPanel>
      <Dashes />
      <Heading>{"GENERIC A-TLP\u00a0\u00a0"}</Heading>
      <Dashes />
      <Heading>A FREE PRODUCT POWERED</Heading>
      <Heading>{"BY\u00a0\u00a0\u00a0\u00a0"}</Heading>
      <Heading>http://TRADELIKEAPRO.ru</Heading>
      <Dashes />
      <Heading>USE ON M15 CHART</Heading>
      <Dashes />
      <Param>Start First Session = {a}</Param>
      <Param>End First Session = {b}</Param>
      <Param>Start Second Session = {c}</Param>
      <Param>End Second Session = {d}</Param>
      <Dashes $in />
      <Param>Take Profit = {chart.tp} pips</Param>
      <Param>Stop Loss = {chart.sl} pips</Param>
      <Dashes $in />
      <Param>Max Spread = {chart.max} pips</Param>
      <Param>Spread = {chart.sp} pips - NORMAL</Param>
      <Param>Trading Lots = 0.10</Param>
      <Dashes $in />
    </InfoPanel>
  );
}

function ChartWindow({ chart }) {
  const active = chart.active;
  return (
    <MdiWindow $active={active}>
      <MdiTitle>
        {Icon.mdi}
        <MdiName $active={active}>{chart.name}</MdiName>
        <MdiButton $active={active} aria-label="Свернуть">{Icon.min}</MdiButton>
        <MdiButton $active={active} aria-label="Развернуть">{Icon.max}</MdiButton>
        <MdiButton $active={active} $close aria-label="Закрыть">{Icon.close}</MdiButton>
      </MdiTitle>
      <ChartClient>
        <Chart chart={chart} />
        <Info chart={chart} />
      </ChartClient>
    </MdiWindow>
  );
}

/* ---------- lists ---------- */

const MENU = ["Файл", "Вид", "Вставка", "Графики", "Сервис", "Окно", "Справка"];
const PERIODS = ["M1", "M5", "M15", "M30", "H1", "H4", "D1", "W1", "MN"];
const TABS = [
  ["GBPUSD,M15", 99], ["USDJPY,M15", 87], ["GBPCAD,M15", 96], ["GBPCHF,M15", 92],
  ["EURGBP,M15", 92], ["EURCHF,M15", 92], ["USDCAD,M15", 96], ["USDCHF,M15", 92],
];
const COLUMNS = [
  ["Время", "2017.02.08 22:14:00", 242], ["Тип", "sell", 121], ["Объем", "0.10", 94], ["Символ", "gbpusd", 121],
  ["Цена", "1.25330", 135], ["S / L", "1.25670", 133], ["T / P", "1.23330", 135], ["Цена", "1.25427", 133],
  ["Комиссия", "0.00", 134], ["Налоги", "0.00", 134], ["Своп", "0.18", 134],
];
const TERM_TABS = [
  ["Торговля"], ["Активы"], ["История Счета"], ["Новости", "99"], ["Алерты"], ["Почта", "2"],
  ["Маркет"], ["Сигналы"], ["Библиотека"], ["Эксперты"], ["Журнал"],
];

const MetaTrader = () => (
  <Svg w={24}>
    <path d="M7 1h12v12H7z" fill="#e6f1fb" stroke="#5f9fd8" /><path d="M11 6h12v14H11z" fill="#a8d0f0" stroke="#4a8cc8" />
    <path d="M9 4h6M9 6h3M13 9h8M13 17h8" stroke="#fff" /><circle cx="17" cy="13" r="2.500" stroke="#fff" />
    <circle cx="7" cy="8" r="4" fill="#f4c888" stroke="#c07a2a" /><path d="M3 7c0-5 8-5 8 0-3 0-5-2-8 0z" fill="#e88a1a" />
    <path d="M0 22c0-6 3-9 7-9s6 3 6 9z" fill="#5ab030" /><path d="M7 13l2 3-2 5-2-5z" fill="#fff" />
  </Svg>
);

const TASKS = [
  ["Пуск", 0, <Svg w={20} key="i"><path d="M0 3l8.500-1.200v7.700H0zM9.500 1.700L20 0v9.500H9.500zM0 10.500h8.500v7.700L0 17zM9.500 10.500H20V20L9.500 18.300z" fill="#fff" /></Svg>],
  ["Поиск", 0, <Svg w={18} key="i"><circle cx="11" cy="6.500" r="5.500" stroke="#fff" strokeWidth="1.400" /><path d="M7 10.500L1 16.500" stroke="#fff" strokeWidth="1.600" /></Svg>],
  ["Представление задач", 0, <Svg w={20} h={16} key="i"><rect x="4.500" y="1" width="11" height="14" stroke="#fff" strokeWidth="1.300" /><path d="M3 2.500H.7v11H3M17 2.500h2.300v11H17" stroke="#fff" strokeWidth="1.200" /></Svg>],
  ["VLC", 0, <Svg w={22} h={24} key="i"><path d="M3 18h16l2 5H1z" fill="#f08a1a" /><path d="M9.500 2h3L17 20q-6 2.500-12 0z" fill="#f58a1c" /><path d="M8.500 6h5l1 4q-3.500 1.500-7 0zM6.500 14q4.500 2 9 0l.8 3q-5 2-10.600 0z" fill="#f4f4f4" /></Svg>],
  ["AIMP", 0, <Svg w={24} key="i"><path d="M11 1l5 8-9 9h6v2H1z" fill="#2a9ae0" /><path d="M12 1l4 2 7 18-5 1-4-10-2-2z" fill="#f4c81c" /><path d="M11 9v7H5z" fill="#fff" /></Svg>],
  ["Total Commander", 0, <Svg w={24} key="i"><rect x="1" width="22" height="23" rx="1" fill="#2438c0" /><rect x="6" width="12" height="8" fill="#c8d0e0" /><rect x="12" y="1" width="3" height="6" fill="#2438c0" /><rect x="4" y="11" width="16" height="12" fill="#fff" /><path d="M5 13.500h14M5 16.500h14" stroke="#e04050" /></Svg>],
  ["Opera", 1, <Svg w={24} key="i"><ellipse cx="12" cy="12" rx="11" ry="11.500" fill="#e01020" /><ellipse cx="12" cy="12" rx="4.500" ry="8" fill="#000" /></Svg>],
  ["Chrome", 1, <Svg w={24} key="i"><circle cx="12" cy="12" r="11" fill="#e8c22a" /><path d="M12 12L2.500 6.500A11 11 0 0121.500 6.500L21.500 7H12z" fill="#dd3b2c" /><path d="M12 12L2.500 6.500A11 11 0 0011 23l5-9z" fill="#35a04a" /><circle cx="12" cy="12" r="5.500" fill="#fff" /><circle cx="12" cy="12" r="4.300" fill="#4a86e8" /></Svg>],
  ["Yandex", 1, <Svg w={24} key="i"><circle cx="12" cy="12" r="11" fill="#f4f2ee" /><path d="M6.500 5l5.500 9 5.500-9M12 13v8" stroke="#e01a20" strokeWidth="2.600" /></Svg>],
  ["Skype", 1, <Svg w={24} key="i"><path d="M7 1a6 6 0 015 1 10 10 0 0110 12 6 6 0 01-9 8A10 10 0 012 11 6.500 6.500 0 017 1z" fill="#00aff0" /><path d="M16 8c-1-3-8-3-8 .5 0 4 8 2.500 8 6.500 0 3.500-8 3.500-8.500 0" stroke="#fff" strokeWidth="2.300" /></Svg>],
  ["Viber", 1, <Svg w={24} key="i"><path d="M12 .5c9.500 0 11.500 3 11.500 10s-2 9.500-9.500 10l-4 3v-3C2.500 20 .5 17 .5 10.500S2.500.5 12 .5z" fill="#f0ecfb" /><path d="M12 2c8 0 10 2.500 10 8.500s-2 8.500-8.500 8.500L11 21v-2.500C3.500 18.500 2 15.500 2 10.500S4 2 12 2z" fill="#7a5fd0" /><path d="M8 5.500c-3 3 4 11 8.500 10l1-2-3-2-1.500 1c-1.500-.5-2.500-2-3-3.500l1-1.500L9 5.500z" fill="#fff" /><path d="M13 5c3 .3 4.500 2 4.500 5M13 7.500c1.500.3 2 1 2 2.500" stroke="#fff" /></Svg>],
  ["MetaTrader 4", 1, <MetaTrader key="i" />],
  ["MetaTrader", 2, <MetaTrader key="i" />],
];

export default function App() {
  return (
    <Page>
      <GlobalStyle />
      <TitleBar>
        {Icon.logo}
        <AppTitle>9899673: Alpari-ECN-Demo - Демо Счет - USDJPY,M15</AppTitle>
        <CaptionButton aria-label="Свернуть"><Svg w={10}><path d="M0 5.500h10" stroke="#fff" /></Svg></CaptionButton>
        <CaptionButton aria-label="Восстановить"><Svg w={10}><path d="M.5 2.500h7v7h-7zM2.500 2.500v-2h7v7h-2" stroke="#fff" /></Svg></CaptionButton>
        <CaptionButton aria-label="Закрыть"><Svg w={10}><path d="M.5.5l9 9M9.500.5l-9 9" stroke="#fff" /></Svg></CaptionButton>
      </TitleBar>
      <MenuBar>
        {MENU.map((m) => <MenuItem key={m}>{m}</MenuItem>)}
      </MenuBar>

      <ToolRow $h={27}>
        <Strip $end={6}>
          <Grip />
          <Tool $w={34} $gap={6} aria-label="Новый график">{Icon.newChart}<Drop /></Tool>
          <Tool $w={34} $gap={6} aria-label="Профили">{Icon.profiles}<Drop /></Tool>
          <Rule />
          <Tool aria-label="Обзор рынка">{Icon.market}</Tool>
          <Tool aria-label="Окно данных">{Icon.cross}</Tool>
          <Tool aria-label="Избранное">{Icon.favorites}</Tool>
          <Tool $on aria-label="Навигатор">{Icon.navigator}</Tool>
          <Tool aria-label="Тестер">{Icon.tester}</Tool>
          <Rule />
          <Tool $w={102} $gap={4}>{Icon.newOrder}Новый ордер</Tool>
          <Tool aria-label="MetaEditor">{Icon.book}</Tool>
          <Tool $w={107} $gap={4}>{Icon.auto}Авто-торговля</Tool>
        </Strip>
        <Strip $end={0}>
          <Grip />
          <Tool aria-label="Бары">{Icon.bars}</Tool>
          <Tool $on aria-label="Свечи">{Icon.candles}</Tool>
          <Tool aria-label="Линия">{Icon.line}</Tool>
          <Rule />
          <Tool aria-label="Увеличить">{Icon.zoomIn}</Tool>
          <Tool aria-label="Уменьшить">{Icon.zoomOut}</Tool>
          <Tool aria-label="Окна мозаикой">{Icon.tile}</Tool>
          <Rule />
          <Tool $on aria-label="Автопрокрутка">{Icon.scroll}</Tool>
          <Tool $on aria-label="Сдвиг графика">{Icon.shift}</Tool>
          <Rule />
          <Tool $w={34} $gap={6} aria-label="Индикаторы">{Icon.indicator}<Drop /></Tool>
          <Tool $w={34} $gap={6} aria-label="Периоды">{Icon.clock}<Drop /></Tool>
          <Tool $w={34} $gap={6} aria-label="Шаблоны">{Icon.template}<Drop /></Tool>
        </Strip>
        <Spacer />
        <Corner>{Icon.find}{Icon.chat}</Corner>
      </ToolRow>

      <ToolRow $h={26}>
        <Strip $end={0}>
          <Grip />
          <Tool $on aria-label="Курсор">{Icon.pointer}</Tool>
          <Tool aria-label="Перекрестие">{Icon.plusCross}</Tool>
          <Rule />
          <Tool aria-label="Вертикальная линия">{Icon.vline}</Tool>
          <Tool aria-label="Горизонтальная линия">{Icon.hline}</Tool>
          <Tool aria-label="Трендовая линия">{Icon.trend}</Tool>
          <Tool aria-label="Канал">{Icon.channel}</Tool>
          <Tool aria-label="Фибоначчи">{Icon.fibo}</Tool>
          <Tool aria-label="Текст">{Icon.textA}</Tool>
          <Tool aria-label="Метка">{Icon.label}</Tool>
          <Tool $w={34} $gap={6} aria-label="Стрелки">{Icon.shapes}<Drop /></Tool>
        </Strip>
        <Strip $end={1}>
          <Grip />
          {PERIODS.map((p) => <Period key={p} $dim $on={p === "M15"}>{p}</Period>)}
        </Strip>
      </ToolRow>

      <Workspace>
        {CHARTS.map((c) => <ChartWindow key={c.name} chart={c} />)}
      </Workspace>

      <ChartTabs>
        {TABS.map(([t, w], i) => <ChartTab key={t} $w={w} $on={i === 1} $bar={i > 1}>{t}</ChartTab>)}
        <Arrows>
          <Svg w={4} h={8}><path d="M4 0v8L0 4z" fill="#888" /></Svg>
          <Svg w={4} h={8}><path d="M0 0v8l4-4z" fill="#888" /></Svg>
        </Arrows>
      </ChartTabs>

      <Terminal>
        <SideBar>
          <SideClose aria-label="Закрыть">x</SideClose>
          <SideTitle>Терминал</SideTitle>
        </SideBar>
        <TerminalBody>
          <TableBox>
            <Orders>
              <colgroup>
                <col style={{ width: 174 }} />
                {COLUMNS.map((c, i) => <col key={i} style={{ width: c[2] }} />)}
                <col />
              </colgroup>
              <thead>
                <tr>
                  <Th $left><Inline $gap={12}>Ордер<Svg w={4} h={8}><path d="M.5 8l3-8" stroke="#888" /></Svg></Inline></Th>
                  {COLUMNS.map((c, i) => <Th key={i}>{c[0]}</Th>)}
                  <Th>Прибыль</Th>
                </tr>
              </thead>
              <tbody>
                <tr>
                  <Td $left>
                    <Inline $gap={4}>
                      <Svg w={14}><path d="M1.500.5h6l3 3v9h-9z" fill="#fff" stroke="#555" /><circle cx="10" cy="10.500" r="3.200" fill="#e0401a" stroke="#a02808" /></Svg>
                      1454981065
                    </Inline>
                  </Td>
                  {COLUMNS.map((c, i) => <Td key={i}>{c[1]}</Td>)}
                  <Td $last>
                    <Inline $end $gap={10}>-9.70<Svg w={8}><path d="M1 1l6 6M7 1L1 7" stroke="#9a9a9a" strokeWidth="2" /></Svg></Inline>
                  </Td>
                </tr>
                <tr>
                  <Sum colSpan={12}>
                    <Inline $gap={4}>
                      <Svg w={14} h={13}><rect x="1" y=".5" width="11" height="12" rx="1" fill="#fff" stroke="#777" /><path d="M5 3h3v3.500h2.200L6.500 10.500 2.800 6.500H5z" fill="#e0401a" stroke="#902008" strokeWidth=".5" /></Svg>
                      {"Баланс: 280.01 USD\u00a0 Средства: 270.49\u00a0 Маржа: 25.07\u00a0 Свободная маржа: 245.42\u00a0 Уровень: 1079.11%"}
                    </Inline>
                  </Sum>
                  <Sum $last>-9.52</Sum>
                </tr>
              </tbody>
            </Orders>
          </TableBox>
          <TermTabs>
            {TERM_TABS.map(([t, n], i) => (
              <TermTab key={t} $on={i === 0}>{t}{n && <Count>{n}</Count>}</TermTab>
            ))}
          </TermTabs>
        </TerminalBody>
      </Terminal>

      <StatusBar>
        <span>Страница торговых ордеров</span>
        <Spacer />
        <StatusCell $w={116}>Default</StatusCell>
        <StatusCell $w={102} /><StatusCell $w={71} /><StatusCell $w={71} /><StatusCell $w={69} /><StatusCell $w={70} /><StatusCell $w={66} />
        <StatusCell $w={129}><Signal />12437/7 kb</StatusCell>
      </StatusBar>

      <TaskBar>
        {TASKS.map(([name, state, icon]) => (
          <TaskButton key={name} aria-label={name} $open={state > 0} $on={state === 2}>{icon}</TaskButton>
        ))}
        <Tray>
          <Svg w={8} h={5}><path d="M0 5l4-5 4 5z" fill="#fff" /></Svg>
          <Svg w={40} h={16}>
            <path d="M16.500 3.500h14v9h-11M22 15.500h7M25.500 12.500v3M14.500 1.500h4v4h-4zM16.500 6v9.500" stroke="#fff" />
          </Svg>
          <Svg w={16}><path d="M.5 5.500H3l3.500-3v11l-3.500-3H.5zM8.500 6c1 1 1 3 0 4" stroke="#fff" /><path d="M11 4c2 2 2 6 0 8M13.500 2c3 3 3 9 0 12" stroke="#777" /></Svg>
          <Lang>ENG</Lang>
          <Clock>1:03<br />09.02.2017</Clock>
          <Svg w={17} h={17}><path d="M.7.700h15.600v12h-5l-2.800 3-2.800-3h-5z" stroke="#fff" strokeWidth="1.300" /></Svg>
        </Tray>
        <OldStatus>
          <OldCell $first $w={352}>ля вызова справки нажмите F1</OldCell>
          <OldCell $w={116}>Default</OldCell>
          <OldCell $w={102} /><OldCell $w={71} /><OldCell $w={70} /><OldCell $w={70} /><OldCell $w={70} /><OldCell $w={66} />
          <OldCell $w={132} $last><Signal />3070/9 kb</OldCell>
          <Svg w={14} h={8}><path d="M2 8l8-8M6 8l8-8M10 8l4-4" stroke="#777" /></Svg>
        </OldStatus>
      </TaskBar>
    </Page>
  );
}
